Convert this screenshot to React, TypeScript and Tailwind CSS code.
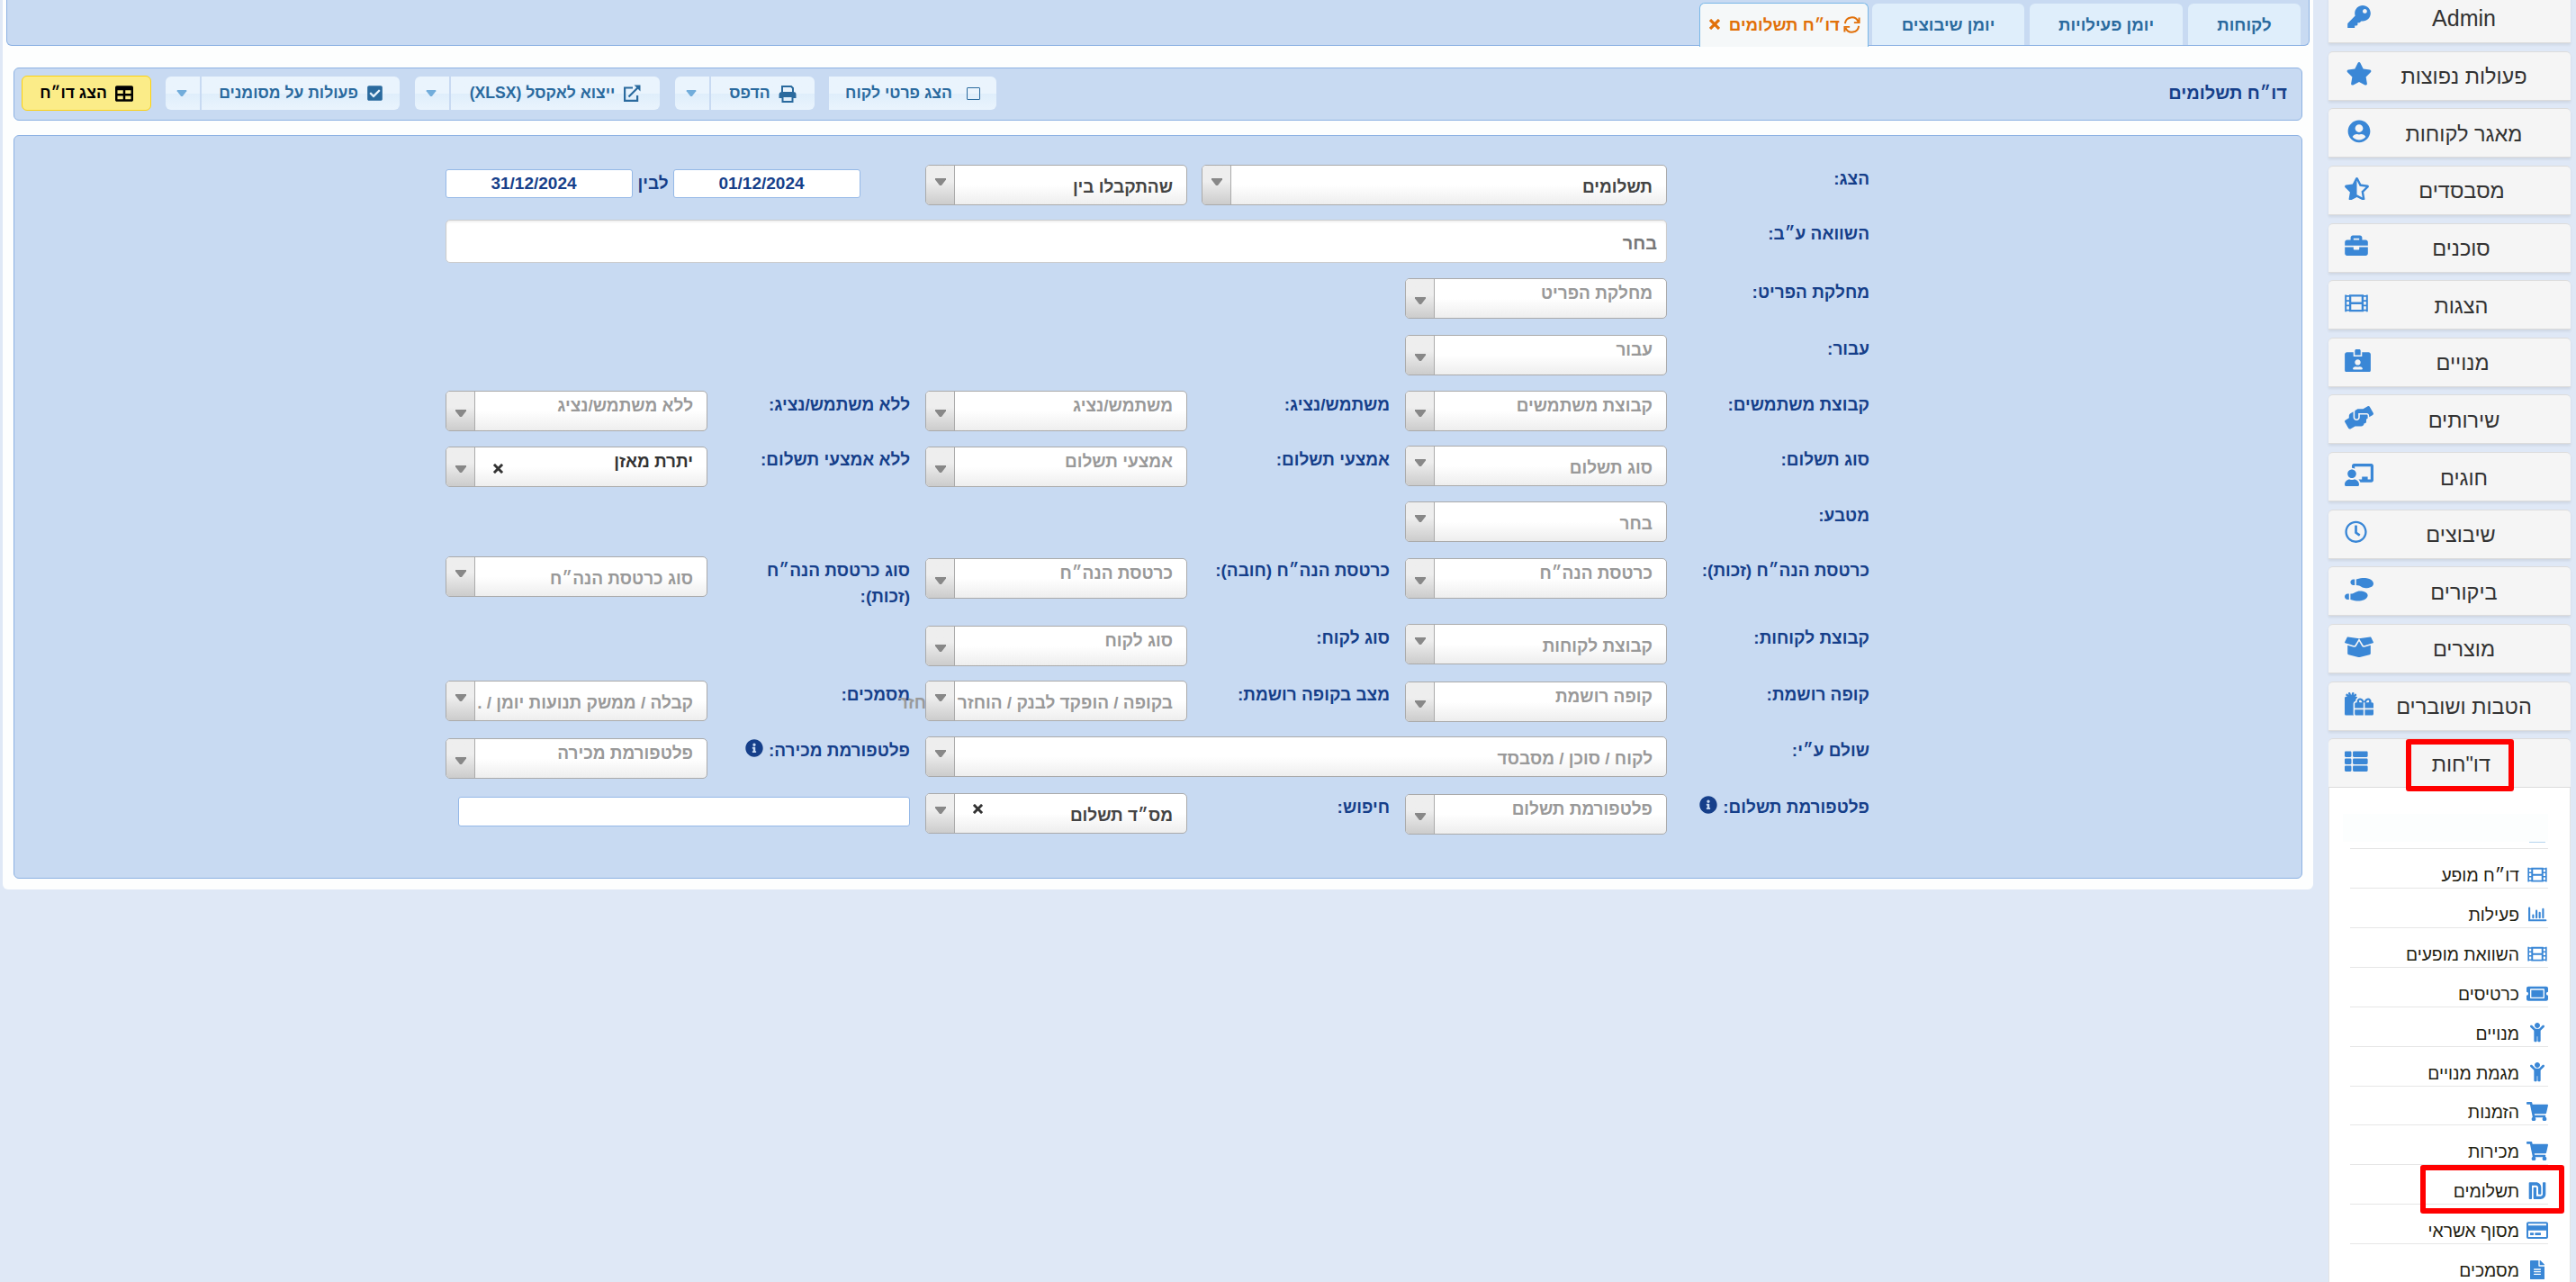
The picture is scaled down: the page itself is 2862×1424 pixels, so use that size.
import React from 'react';
import type { IconType } from 'react-icons';
import {
  FaKey, FaStar, FaUserCircle, FaStarHalfAlt, FaBriefcase, FaIdCardAlt, FaHandsHelping,
  FaChalkboardTeacher, FaRegClock, FaShoePrints, FaBoxOpen, FaGifts, FaThList, FaTicketAlt,
  FaChild, FaShoppingCart, FaShekelSign, FaRegCreditCard, FaFileAlt, FaTable, FaCheckSquare,
  FaInfoCircle,
} from 'react-icons/fa';

type IconProps = { className?: string };

const FilmIcon = ({ className }: IconProps) => (
  <svg viewBox="0 0 26 26" className={className} fill="none" stroke="currentColor">
    <path d="M1 3.5v19M25 3.5v19" strokeWidth="2" />
    <path d="M6 4.5h14v17H6zM6 13h14" strokeWidth="2.4" />
    <path d="M1 5h5M1 10.2h5M1 15.6h5M1 21h5M20 5h5M20 10.2h5M20 15.6h5M20 21h5" strokeWidth="1.8" />
  </svg>
);

const ChartIcon = ({ className }: IconProps) => (
  <svg viewBox="0 0 24 24" className={className} fill="none" stroke="currentColor" strokeWidth="2.4" strokeLinecap="round">
    <path d="M2 4v15.5h20.5" />
    <path d="M6.8 16v-3M11 16V7.5M15 16v-6M19.2 16V5.5" />
  </svg>
);

const SyncIcon = ({ className }: IconProps) => (
  <svg viewBox="0 0 20 20" className={className} fill="none" stroke="currentColor" strokeWidth="2.1">
    <path d="M2 8.6a8 8 0 0 1 15.3-2.4M18.5 1.5v6h-6" />
    <path d="M18 11.4a8 8 0 0 1-15.3 2.4M1.5 18.5v-6h6" />
  </svg>
);

const PrintIcon = ({ className }: IconProps) => (
  <svg viewBox="0 0 20 20" className={className} fill="none" stroke="currentColor" strokeWidth="2">
    <path d="M4 9V2h10l2 2v5M4 14H1.5v-3a2 2 0 0 1 2-2h13a2 2 0 0 1 2 2v3H16M4.5 13h11v6h-11z" />
    <path d="M2 10h16v3H2z" fill="currentColor" />
  </svg>
);

const ExportIcon = ({ className }: IconProps) => (
  <svg viewBox="0 0 20 20" className={className} fill="none" stroke="currentColor" strokeWidth="2.2">
    <path d="M11 3.5H2.1v14.4h14V12M6.5 13.5L17 3" />
    <path d="M12.5.5H19.5V7.5z" fill="currentColor" stroke="none" />
  </svg>
);

const CloseIcon = ({ className }: IconProps) => (
  <svg viewBox="0 0 12 12" className={className} fill="none" stroke="currentColor" strokeWidth="3.2">
    <path d="M1 1l10 10M11 1L1 11" />
  </svg>
);

type MenuItem = { label: string; icon: IconType | React.FC<IconProps>; box: string };

const MENU: MenuItem[] = [
  { label: 'Admin', icon: FaKey, box: 'w-8' },
  { label: 'פעולות נפוצות', icon: FaStar, box: 'w-8' },
  { label: 'מאגר לקוחות', icon: FaUserCircle, box: 'w-8' },
  { label: 'מסבסדים', icon: FaStarHalfAlt, box: 'w-[27px]' },
  { label: 'סוכנים', icon: FaBriefcase, box: 'w-[26px]' },
  { label: 'הצגות', icon: FilmIcon, box: 'w-[26px]' },
  { label: 'מנויים', icon: FaIdCardAlt, box: 'w-[29px]' },
  { label: 'שירותים', icon: FaHandsHelping, box: 'w-8' },
  { label: 'חוגים', icon: FaChalkboardTeacher, box: 'w-8' },
  { label: 'שיבוצים', icon: FaRegClock, box: 'w-[25px]' },
  { label: 'ביקורים', icon: FaShoePrints, box: 'w-8' },
  { label: 'מוצרים', icon: FaBoxOpen, box: 'w-8' },
  { label: 'הטבות ושוברים', icon: FaGifts, box: 'w-8' },
];

const REPORTS: { label: string; icon: IconType | React.FC<IconProps> }[] = [
  { label: 'דו״ח מופע', icon: FilmIcon },
  { label: 'פעילות', icon: ChartIcon },
  { label: 'השוואת מופעים', icon: FilmIcon },
  { label: 'כרטיסים', icon: FaTicketAlt },
  { label: 'מנויים', icon: FaChild },
  { label: 'מגמת מנויים', icon: FaChild },
  { label: 'הזמנות', icon: FaShoppingCart },
  { label: 'מכירות', icon: FaShoppingCart },
  { label: 'תשלומים', icon: FaShekelSign },
  { label: 'מסוף אשראי', icon: FaRegCreditCard },
  { label: 'מסמכים', icon: FaFileAlt },
];

const Arrow = ({ className }: IconProps) => (
  <svg viewBox="0 0 12 8" className={className} fill="currentColor">
    <path d="M0 0h12v1.5L7 8H5L0 1.5z" />
  </svg>
);

type SelectProps = {
  text: string;
  className?: string;
  // multi selects keep their caption high and the arrow low
  multi?: boolean;
  filled?: boolean;
  clearable?: boolean;
  spill?: string;
};

function Select({ text, className = 'w-[291px]', multi, filled, clearable, spill }: SelectProps) {
  const tone = filled ? (multi ? 'text-[#333]' : 'text-[#444]') : 'text-[#999]';
  return (
    <div className={`relative flex h-[45px] shrink-0 rounded-[5px] border border-[#aaa] bg-linear-to-b from-white from-50% to-[#eee] ${className}`}>
      <div className={`flex min-w-0 flex-1 items-start overflow-hidden whitespace-nowrap ps-[15px] text-[19px] leading-[24px] ${tone} ${multi ? 'pt-[4px]' : 'pt-[12px]'}`}>
        {text}
      </div>
      {clearable && (
        <span className={`flex w-[50px] shrink-0 justify-center text-[#333] ${multi ? 'pt-[18px]' : 'pt-[11px]'}`}>
          <CloseIcon className="size-[11px]" />
        </span>
      )}
      <div className={`flex w-[32px] shrink-0 justify-center rounded-l-[4px] border-r border-[#aaa] bg-linear-to-b from-[#eee] from-40% to-[#ccc] text-[#888] ${multi ? 'pt-[20px]' : 'pt-[14px]'}`}>
        <Arrow className="h-[8px] w-[12px]" />
      </div>
      {spill && (
        <span className="absolute top-[12px] right-full text-[19px] leading-[24px] whitespace-nowrap text-[#999]">{spill}</span>
      )}
    </div>
  );
}

function Label({ children, className = '', info }: { children: React.ReactNode; className?: string; info?: boolean }) {
  return (
    <div className={`flex w-[242px] shrink-0 items-start gap-[6px] ps-[17px] pt-px text-[19px] leading-[29px] text-[#163f8a] ${className}`}>
      <span>{children}</span>
      {info && <FaInfoCircle className="mt-[2px] size-[20px]" />}
    </div>
  );
}

function Row({ children, className }: { children: React.ReactNode; className: string }) {
  return <div className={`flex items-start ${className}`}>{children}</div>;
}

const TextBox = ({ value, className }: { value?: string; className: string }) => (
  <div className={`flex shrink-0 items-center justify-center rounded-[3px] border border-[#95b8e7] bg-white pr-[12px] text-[19px] text-[#163f8a] ${className}`}>
    {value}
  </div>
);

const TOOL_BG = 'bg-linear-to-b from-[#eaf4fd] from-50% via-[#dfeefb] via-52% to-[#eaf4fd] text-[#2a6a9e]';

function ToolButton({ icon, label, className, split }: { icon: React.ReactNode; label: string; className: string; split?: boolean }) {
  return (
    <div className="flex h-[37px] gap-[2px]">
      <div className={`flex items-center justify-center rounded-r-[6px] ${TOOL_BG} ${className}`}>
        {icon}
        <span>{label}</span>
      </div>
      {split && (
        <div className={`flex w-[38px] items-center justify-center rounded-l-[6px] pr-[2px] ${TOOL_BG}`}>
          <Arrow className="h-[7px] w-[12px] text-[#72addb]" />
        </div>
      )}
    </div>
  );
}

function Tabs() {
  const tab = 'flex h-[46px] items-center justify-center rounded-t-[6px] bg-[#dfeefb] pt-[2px] text-[#2a6a9e]';
  return (
    <div className="mr-[4px] ml-[4px] flex h-[51px] items-end gap-[6px] rounded-b-[6px] border border-t-0 border-[#8db2e3] bg-[#c8daf2] pr-[9px] text-[18.7px] font-bold">
      <div className={`${tab} w-[125px]`}>לקוחות</div>
      <div className={`${tab} w-[170px]`}>יומן פעילויות</div>
      <div className={`${tab} w-[169px]`}>יומן שיבוצים</div>
      <div className="-mr-[2px] -mb-[2px] flex h-[49px] w-[188px] items-center rounded-t-[6px] border border-b-0 border-[#79b7e7] bg-[#f5f8f9] pr-[8px] text-[#e17009]">
        <SyncIcon className="-mt-[2px] size-[19px]" />
        <span className="mr-[4px]">דו״ח תשלומים</span>
        <CloseIcon className="-mt-[2px] mr-[10px] size-[12px]" />
      </div>
    </div>
  );
}

function Toolbar() {
  return (
    <div className="mx-[12px] mt-[24px] flex h-[59px] items-start justify-between rounded-[6px] border border-[#8db2e3] bg-[#c8daf2] pt-[9px] pr-[16px] pl-[8px] font-bold">
      <div className="pt-[4px] text-[20px] leading-[28px] text-[#163f8a]">דו״ח תשלומים</div>
      <div className="flex text-[17.6px]">
        <ToolButton icon={<span className="h-[14px] w-[15px] rounded-[1px] border-[1.5px] border-current" />} label="הצג פרטי לקוח" className="w-[186px] gap-[16px] rounded-l-none" />
        <div className="mr-[16px] flex gap-[17px]">
          <ToolButton split icon={<PrintIcon className="size-[20px]" />} label="הדפס" className="w-[115px] gap-[9px]" />
          <ToolButton split icon={<ExportIcon className="size-[20px]" />} label="ייצוא לאקסל (XLSX)" className="w-[232px] gap-[9px]" />
          <ToolButton split icon={<FaCheckSquare className="h-[19px] w-[17px]" />} label="פעולות על מסומנים" className="w-[220px] gap-[10px]" />
        </div>
        <div className="-mt-[1px] mr-[16px] flex h-[39px] w-[144px] items-center justify-center gap-[9px] rounded-[6px] border border-[#fcd113] bg-[#fbec88] text-black">
          <FaTable className="size-[20px]" />
          <span>הצג דו״ח</span>
        </div>
      </div>
    </div>
  );
}

function Filters() {
  return (
    <div className="mx-[12px] mt-[16px] h-[826px] rounded-[6px] border border-[#8db2e3] bg-[#c8daf2] pt-[32px] pr-[480px] font-bold">
      <Row className="h-[61px]">
        <Label className="-mr-[17px]">הצג:</Label>
        <Select text="תשלומים" filled className="w-[517px]" />
        <Select text="שהתקבלו בין" filled className="mr-[16px] w-[291px]" />
        <TextBox value="01/12/2024" className="mt-[5px] mr-[72px] h-[32px] w-[208px]" />
        <span className="mt-[5px] w-[45px] text-center text-[19px] leading-[32px] text-[#163f8a]">לבין</span>
        <TextBox value="31/12/2024" className="mt-[5px] h-[32px] w-[208px]" />
      </Row>
      <Row className="h-[65px]">
        <Label className="-mr-[17px]">השוואה ע״ב:</Label>
        <div className="flex h-[48px] w-[1357px] items-center rounded-[5px] border border-[#ccc] bg-white ps-[10px] pt-[4px] text-[20px] text-[#777] shadow-[inset_0_2px_2px_rgba(0,0,0,0.06)]">בחר</div>
      </Row>
      <Row className="h-[63px]">
        <Label className="-mr-[17px]">מחלקת הפריט:</Label>
        <Select multi text="מחלקת הפריט" />
      </Row>
      <Row className="h-[62px]">
        <Label className="-mr-[17px]">עבור:</Label>
        <Select multi text="עבור" />
      </Row>
      <Row className="h-[61px]">
        <Label className="-mr-[17px]">קבוצת משתמשים:</Label>
        <Select multi text="קבוצת משתמשים" />
        <Label>משתמש/נציג:</Label>
        <Select multi text="משתמש/נציג" />
        <Label>ללא משתמש/נציג:</Label>
        <Select multi text="ללא משתמש/נציג" />
      </Row>
      <Row className="h-[62px]">
        <Label className="-mr-[17px]">סוג תשלום:</Label>
        <Select text="סוג תשלום" />
        <Label>אמצעי תשלום:</Label>
        <Select multi text="אמצעי תשלום" className="mt-[1px] w-[291px]" />
        <Label>ללא אמצעי תשלום:</Label>
        <Select multi filled clearable text="יתרת מאזן" className="mt-[1px] w-[291px]" />
      </Row>
      <Row className="h-[61px]">
        <Label className="-mr-[17px]">מטבע:</Label>
        <Select text="בחר" />
      </Row>
      <Row className="h-[75px]">
        <Label className="-mr-[17px]">כרטסת הנה״ח (זכות):</Label>
        <Select multi text="כרטסת הנה״ח" className="mt-[2px] w-[291px]" />
        <Label>כרטסת הנה״ח (חובה):</Label>
        <Select multi text="כרטסת הנה״ח" className="mt-[2px] w-[291px]" />
        <Label>סוג כרטסת הנה״ח<br />(זכות):</Label>
        <Select text="סוג כרטסת הנה״ח" />
      </Row>
      <Row className="h-[63px]">
        <Label className="-mr-[17px]">קבוצת לקוחות:</Label>
        <Select text="קבוצת לקוחות" />
        <Label>סוג לקוח:</Label>
        <Select multi text="סוג לקוח" className="mt-[2px] w-[291px]" />
      </Row>
      <Row className="h-[62px]">
        <Label className="-mr-[17px]">קופה רושמת:</Label>
        <Select multi text="קופה רושמת" className="mt-[1px] w-[291px]" />
        <Label>מצב בקופה רושמת:</Label>
        <Select text="בקופה / הופקד לבנק / הוחזר" spill="חזר" />
        <Label>מסמכים:</Label>
        <Select text="קבלה / ממשק תנועות יומן / ." />
      </Row>
      <Row className="h-[63px]">
        <Label className="-mr-[17px]">שולם ע״י:</Label>
        <Select text="לקוח / סוכן / מסבסד" className="w-[824px]" />
        <Label info>פלטפורמת מכירה:</Label>
        <Select multi text="פלטפורמת מכירה" className="mt-[2px] w-[291px]" />
      </Row>
      <Row className="h-[63px]">
        <Label className="-mr-[17px]" info>פלטפורמת תשלום:</Label>
        <Select multi text="פלטפורמת תשלום" className="mt-[1px] w-[291px]" />
        <Label>חיפוש:</Label>
        <Select filled clearable text="מס״ד תשלום" />
        <TextBox className="mt-[4px] mr-[17px] h-[33px] w-[502px]" />
      </Row>
    </div>
  );
}

function Sidebar() {
  const card = 'flex h-[55px] shrink-0 items-center rounded-t-[5px] border-y border-[#dcdcdc] bg-[#f5f5f5] px-[18px] text-[23.5px] text-[#333]';
  return (
    <aside className="-mt-[7px] ml-[17px] flex w-[269px] shrink-0 flex-col">
      {MENU.map(({ label, icon: Icon, box }) => (
        <div key={label} className={`${card} mb-[8.65px] shadow-[0_2px_3px_rgba(0,0,0,0.08)]`}>
          <span className={`mb-[4px] shrink-0 text-[#3a87d6] ${box}`}>
            <Icon className="h-[25.6px] w-full" />
          </span>
          <span dir="auto" className={`flex-1 text-center ${label === 'Admin' ? 'pt-px text-[25px]' : 'pt-[3px]'}`}>{label}</span>
        </div>
      ))}
      <div className={`${card} relative`}>
        <FaThList className="mb-[4px] size-[25.6px] text-[#3a87d6]" />
        <span dir="rtl" className="flex-1 pt-[3px] text-center">דו"חות</span>
        <div className="absolute top-0 left-[86px] h-[58px] w-[120px] rounded-[3px] border-6 border-[#f00]" />
      </div>
      <div dir="rtl" className="flex-1 border-x border-[#e3e3e3] bg-white pr-[24px] pl-[23px] text-[19.3px] text-[#1e2010]">
        <div className="mt-[29px] -ml-[8px] h-[31px] bg-[#fcfefe]" />
        <div className="flex h-[8px] items-start border-b border-[#e6e6e6]">
          <div className="mr-[3px] h-px w-[18px] bg-[#b5d5ee]" />
        </div>
        {REPORTS.map(({ label, icon: Icon }) => (
          <div key={label} className="relative flex h-[43.88px] items-end border-b border-[#e6e6e6]">
            <span className="mb-[4px] ml-[8px] w-[24px] shrink-0 text-[#3a87d6]">
              <Icon className="h-[21.3px] w-full" />
            </span>
            <span className="leading-[27px]">{label}</span>
            {label === 'תשלומים' && (
              <div className="absolute top-0 -right-[18px] h-[54px] w-[160px] rounded-[3px] border-6 border-[#f00]" />
            )}
          </div>
        ))}
      </div>
    </aside>
  );
}

export default function App() {
  return (
    <div className="flex h-[1424px] w-[2862px] overflow-hidden bg-[#dfe8f6] pl-[3px] font-['Liberation_Sans',Arial,sans-serif]">
      <main dir="rtl" className="h-[988px] w-[2567px] shrink-0 rounded-b-[6px] bg-[#fdfefe]">
        <Tabs />
        <Toolbar />
        <Filters />
      </main>
      <Sidebar />
    </div>
  );
}
